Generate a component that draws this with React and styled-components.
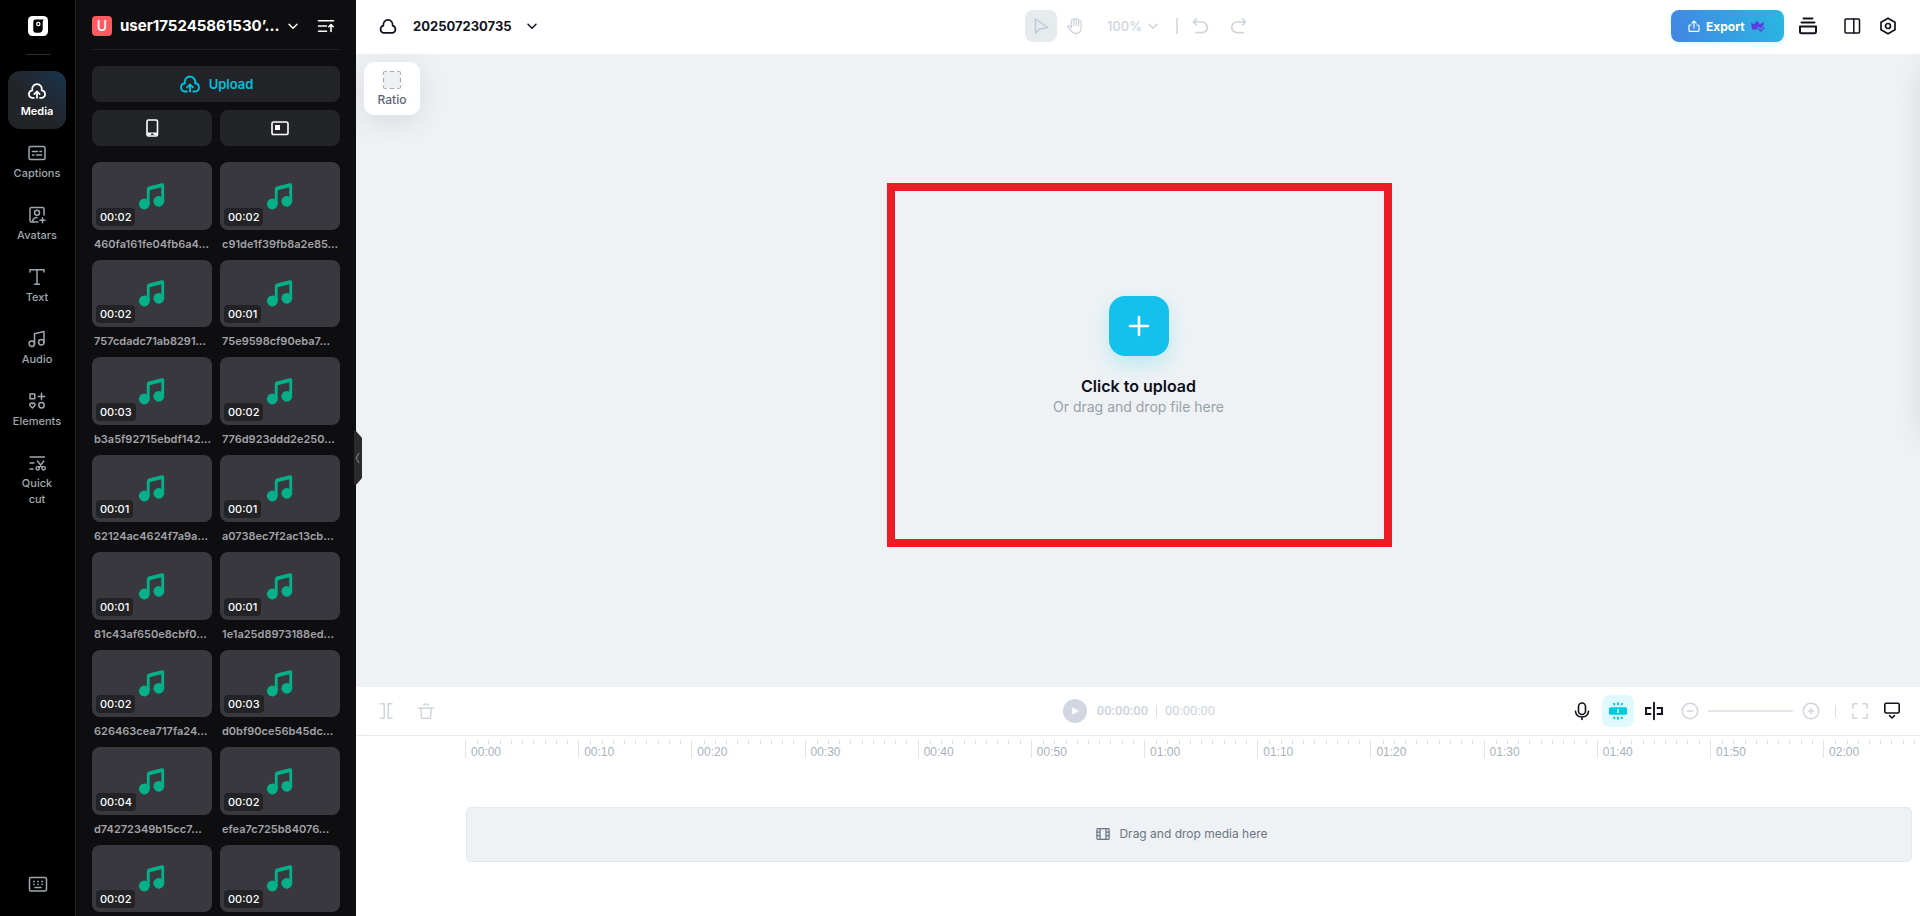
import React from "react";
import styled, { createGlobalStyle, css } from "styled-components";

const GlobalStyle = createGlobalStyle`
  *, *::before, *::after { box-sizing: border-box; }
  body { margin: 0; font-family: Inter, "Liberation Sans", sans-serif; background: #fff; }
  button { font: inherit; color: inherit; border: 0; padding: 0; background: none; cursor: pointer; }
  svg { display: block; flex: none; }
`;

/* ---------- icons ---------- */

function Icon({ size = 20, box = 20, stroke = 1.5, children }) {
  return (
    <svg
      width={size}
      height={size}
      viewBox={`0 0 ${box} ${box}`}
      fill="none"
      stroke="currentColor"
      strokeWidth={stroke}
      strokeLinecap="round"
      strokeLinejoin="round"
      aria-hidden="true"
    >
      {children}
    </svg>
  );
}

const CloudUploadIcon = (props) => (
  <Icon stroke={1.7} {...props}>
    <path d="M7 16.8H4.9a3.8 3.8 0 0 1 .5-7.5A4.8 4.8 0 1 1 14.6 9.3a3.8 3.8 0 0 1 .5 7.5H13" />
    <path d="M10 16.8v-5.7M7.3 13.1 10 10.4l2.7 2.7" />
  </Icon>
);
const CloudIcon = (props) => (
  <Icon stroke={1.7} {...props}>
    <path d="M4.9 16.8a3.8 3.8 0 0 1 .5-7.2A4.7 4.7 0 1 1 14.6 9.6a3.8 3.8 0 0 1 .5 7.2z" />
  </Icon>
);
const CaptionsIcon = () => (
  <Icon>
    <rect x="2" y="3.5" width="16" height="13" rx="1.5" />
    <path d="M5.5 8.5h5M13 8.5h1.5M5.5 12h1.5M9.5 12h5" />
  </Icon>
);
const AvatarsIcon = () => (
  <Icon>
    <path d="M17 10V4a1.5 1.5 0 0 0-1.5-1.5h-11A1.5 1.5 0 0 0 3 4v11.5A1.5 1.5 0 0 0 4.5 17H11M5.5 16.5c.5-2.7 2.2-4 4.5-4" />
    <circle cx="10" cy="7.8" r="2.5" />
    <path d="M15.5 12.7v5M13 15.2h5" />
  </Icon>
);
const TextIcon = () => (
  <Icon>
    <path d="M3 5V2.8h14V5M10 2.8v14.4M7.5 17.2h5" />
  </Icon>
);
const AudioIcon = () => (
  <Icon>
    <circle cx="4.8" cy="14.8" r="2.7" />
    <circle cx="14.3" cy="13.2" r="2.7" />
    <path d="M7.5 14.8V4.8L17 2.5v10.7" />
  </Icon>
);
const ElementsIcon = () => (
  <Icon>
    <rect x="3" y="3" width="4.8" height="4.8" />
    <path d="M14.5 2.2v6.4M11.3 5.4h6.4" />
    <circle cx="14.5" cy="14.3" r="2.7" />
    <path d="M5.4 17 2.8 14.3a1.6 1.6 0 0 1 2.6-1.7 1.6 1.6 0 0 1 2.6 1.7z" />
  </Icon>
);
const QuickCutIcon = () => (
  <Icon stroke={1.4}>
    <path d="M3 4h14.5M3 10h4M3 16h3M10.5 8l5 6.5M16.8 8l-5 6.5" />
    <circle cx="10.8" cy="15.3" r="1.7" />
    <circle cx="16.6" cy="15.3" r="1.7" />
  </Icon>
);
const KeyboardIcon = () => (
  <Icon>
    <rect x="1.5" y="3.5" width="17" height="13.5" rx="1.5" />
    <path d="M7 13.5h6" />
    <path d="M6 7.5h.01M10 7.5h.01M14 7.5h.01M6 10.3h.01M10 10.3h.01M14 10.3h.01" strokeWidth="1.8" />
  </Icon>
);
const LogoIcon = () => (
  <svg width="20" height="20" viewBox="0 0 20 20" role="img" aria-label="Home">
    <rect width="20" height="20" rx="4.5" fill="#fff" />
    <path d="M5.3 5.8Q5.3 3.5 7.6 3.5H15.8L14.7 5.5V12.7Q14.7 16.7 10.7 16.7H8Q5.3 16.7 5.3 14Z" fill="#000" />
    <circle cx="10.3" cy="8" r="1.7" fill="#000" stroke="#fff" strokeWidth="1.2" />
  </svg>
);
const ChevronIcon = ({ size = 12 }) => (
  <Icon size={size} box={12} stroke={1.5}>
    <path d="M2 4.2 6 8.2 10 4.2" />
  </Icon>
);
const SortIcon = () => (
  <Icon size={18} box={18} stroke={1.6}>
    <path d="M1.5 3.8h15M1.5 9h8M1.5 14.2h8M14 14.5V8M11.8 9.7 14 7.5l2.2 2.2" />
  </Icon>
);
const PhoneIcon = () => (
  <Icon stroke={1.6}>
    <rect x="5" y="2" width="10.5" height="16" rx="1.5" />
    <path d="M5.5 14.5h9.5v2.5h-9.5z" fill="currentColor" stroke="none" />
    <path d="M9.7 16.3h1.2" stroke="#232428" />
  </Icon>
);
const ScreenIcon = () => (
  <Icon stroke={1.6}>
    <rect x="2" y="4" width="16" height="12.5" rx="1.8" />
    <rect x="5" y="7" width="5" height="5" fill="currentColor" stroke="none" />
  </Icon>
);
const NoteIcon = () => (
  <svg width="28" height="28" viewBox="0 0 28 28" aria-hidden="true" fill="#06b088">
    <circle cx="6.3" cy="22" r="5.4" />
    <circle cx="20.8" cy="19.3" r="5.4" />
    <path d="M8.8 22V7.3Q8.8 5.2 10.8 4.6L23.7 1.3Q26.2.8 26.2 3.2V19.3H23.3V5.3L11.7 8.3V22Z" />
  </svg>
);
const CursorIcon = () => (
  <Icon>
    <path d="M4.5 3v14.3l4-4.3 8.5-1.5z" />
  </Icon>
);
const HandIcon = () => (
  <Icon stroke={1.3}>
    <path d="M6.5 10.5V4.7a1.2 1.2 0 0 1 2.4 0V9.5 3.5a1.2 1.2 0 0 1 2.4 0V9.5 4.2a1.2 1.2 0 0 1 2.4 0V10 6.2a1.2 1.2 0 0 1 2.5 0v5.3c0 3.7-2 6-5.3 6-2.5 0-4-1-5.2-3L3 10.9c-.5-1 1-1.9 1.9-1l1.6 1.9z" />
  </Icon>
);
const UndoIcon = () => (
  <Icon stroke={1.7}>
    <path d="M6.5 3 3.5 6l3 3M3.5 6h8.5a5.3 5.3 0 0 1 0 10.6H6" />
  </Icon>
);
const RedoIcon = () => (
  <Icon stroke={1.7}>
    <path d="M13.5 3l3 3-3 3M16.5 6H8a5.3 5.3 0 0 0 0 10.6h6" />
  </Icon>
);
const ShareIcon = () => (
  <Icon size={12} box={12} stroke={1.2}>
    <path d="M3.2 5H2a1 1 0 0 0-1 1v4.4a1 1 0 0 0 1 1h8a1 1 0 0 0 1-1V6a1 1 0 0 0-1-1H8.8M6 8V1.2M3.9 3.1 6 1l2.1 2.1" />
  </Icon>
);
const CrownIcon = () => (
  <svg width="14" height="12" viewBox="0 0 14 12" aria-hidden="true">
    <path d="M0 2.8 3.2 4.3 6 .5 8.8 4.3 13 1.8 12.4 6 9.5 8.7 7.5 6.8 6 8.2 7.3 9.5H1.1Z" fill="#5b3fe0" />
    <path d="M7.8 9 10 11l3.5-3.6" fill="none" stroke="#5b3fe0" strokeWidth="1.3" />
  </svg>
);
const StackIcon = () => (
  <Icon stroke={2}>
    <path d="M5.5 2.5h9M3.5 6.4h13" />
    <path d="M2 10.5h16v5.3a1.5 1.5 0 0 1-1.5 1.5h-13A1.5 1.5 0 0 1 2 15.8z" />
  </Icon>
);
const PanelIcon = () => (
  <Icon>
    <rect x="3" y="3" width="14.5" height="14" rx="1" />
    <path d="M11.8 3v14" />
  </Icon>
);
const SettingsIcon = () => (
  <Icon stroke={1.7}>
    <path d="M10 2.2 17 6.2v7.6l-7 4-7-4V6.2z" />
    <circle cx="10" cy="10" r="2.5" />
  </Icon>
);
const RatioIcon = () => (
  <Icon>
    <rect x="2" y="2" width="16" height="16" rx="2" fill="#eef1f3" stroke="none" />
    <path d="M1.5 4.5V3A1.5 1.5 0 0 1 3 1.5h1.5M15.5 1.5H17A1.5 1.5 0 0 1 18.5 3v1.5M18.5 15.5V17a1.5 1.5 0 0 1-1.5 1.5h-1.5M4.5 18.5H3A1.5 1.5 0 0 1 1.5 17v-1.5M8 1.5h4M8 18.5h4M1.5 8v4M18.5 8v4" stroke="#a9b2bb" strokeWidth="1.2" />
  </Icon>
);
const PlusIcon = () => (
  <Icon size={22} box={22} stroke={2.6}>
    <path d="M11 2v18M2 11h18" />
  </Icon>
);
const BracketsIcon = () => (
  <Icon>
    <path d="M4 2.8h4.2v14.4H4M16 2.8h-3.8v14.4H16" />
  </Icon>
);
const TrashIcon = () => (
  <Icon>
    <path d="M2.5 7.2h15M7.3 3.9q2.7-1.6 5.4 0M4.8 7.5l.8 9.7h8.8l.8-9.7" />
  </Icon>
);
const PlayIcon = () => (
  <svg width="24" height="24" viewBox="0 0 24 24" aria-hidden="true">
    <path d="M9.5 8.7v6.6L15.5 12z" fill="#fff" stroke="#fff" strokeWidth=".6" strokeLinejoin="round" />
  </svg>
);
const MicIcon = () => (
  <Icon stroke={1.6}>
    <rect x="6.5" y="2" width="7" height="11.5" rx="3.5" />
    <path d="M3.5 10.3c.3 3.6 2.8 5.7 6.5 5.7s6.2-2.1 6.5-5.7M10 16v2.5" />
  </Icon>
);
const SnapIcon = () => (
  <Icon>
    <rect x="1" y="6.3" width="18" height="7.4" rx="1.5" fill="currentColor" stroke="none" />
    <path d="M10 8v4" stroke="#fff" strokeLinecap="butt" />
    <path d="M10 2v1.5M6 2.7l.4.9M14 2.7l-.4.9M10 16.5V18M6 17.3l.4-.9M14 17.3l-.4-.9" strokeWidth="1.8" />
  </Icon>
);
const SplitIcon = () => (
  <Icon stroke={1.9}>
    <path d="M10 1.8v16.4M6.5 7H2v6h4.5M13.5 7H18v6h-4.5" strokeLinejoin="miter" />
  </Icon>
);
const ZoomOutIcon = () => (
  <Icon>
    <circle cx="10" cy="10" r="7.7" />
    <path d="M7.2 10h5.6" />
  </Icon>
);
const ZoomInIcon = () => (
  <Icon>
    <circle cx="10" cy="10" r="7.7" />
    <path d="M7.2 10h5.6M10 7.2v5.6" />
  </Icon>
);
const FitIcon = () => (
  <Icon stroke={1.6}>
    <path d="M2.8 7V4.3a1.5 1.5 0 0 1 1.5-1.5H7M13 2.8h2.7a1.5 1.5 0 0 1 1.5 1.5V7M17.2 13v2.7a1.5 1.5 0 0 1-1.5 1.5H13M7 17.2H4.3a1.5 1.5 0 0 1-1.5-1.5V13" />
  </Icon>
);
const PreviewIcon = () => (
  <Icon stroke={1.6}>
    <rect x="2.8" y="2.3" width="14.4" height="9.7" rx="1.5" />
    <path d="M7.5 14.7 10 17l2.5-2.3" />
  </Icon>
);
const FilmIcon = () => (
  <Icon size={14} box={14} stroke={1.3}>
    <rect x="1" y="1.7" width="12" height="10.6" rx=".8" />
    <path d="M4 1.7v10.6M10 1.7v10.6M1 5.2h3M1 8.7h3M10 5.2h3M10 8.7h3" />
  </Icon>
);

/* ---------- shell ---------- */

const Shell = styled.div`
  display: flex;
  height: 100vh;
  overflow: hidden;
`;

const Rail = styled.nav`
  flex: none;
  width: 76px;
  padding: 16px 0 22px;
  display: flex;
  flex-direction: column;
  align-items: center;
  background: #000;
  border-right: 1px solid #212226;
`;

const RailDivider = styled.hr`
  width: 24px;
  height: 1px;
  margin: 18px 0 16px;
  border: 0;
  background: #2d2e33;
`;

const RailList = styled.div`
  flex: 1;
  margin-right: 1px;
  display: flex;
  flex-direction: column;
  gap: 4px;
`;

const RailItem = styled.button`
  width: 58px;
  min-height: 58px;
  padding: 10px ${(p) => (p.$wrap ? 8 : 4)}px;
  display: flex;
  flex-direction: column;
  align-items: center;
  gap: 2px;
  border-radius: 12px;
  font-size: 11px;
  line-height: 16px;
  font-weight: 500;
  color: #9fa8ad;
  white-space: ${(p) => (p.$wrap ? "normal" : "nowrap")};
  ${(p) =>
    p.$active &&
    css`
      color: #fff;
      font-weight: 600;
      background: linear-gradient(45deg, #232428 45%, #17354f 100%);
    `}
`;

const RailFoot = styled.button`
  color: #9fa8ad;
`;

/* ---------- media panel ---------- */

const Panel = styled.aside`
  position: relative;
  flex: none;
  width: 280px;
  padding: 0 16px;
  background: #0e0e10;
  color: #fff;
`;

const PanelHead = styled.header`
  height: 50px;
  padding: 8px 5px 5px 0;
  display: flex;
  align-items: center;
  gap: 8px;
  border-bottom: 1px solid #212226;
`;

const Initial = styled.span`
  flex: none;
  width: 20px;
  height: 20px;
  border-radius: 4px;
  background: #ff5a5f;
  font-size: 14px;
  line-height: 20px;
  font-weight: 500;
  text-align: center;
`;

const Workspace = styled.button`
  flex: 1;
  min-width: 0;
  display: flex;
  align-items: center;
  justify-content: space-between;
  font-size: 15px;
  line-height: 20px;
  font-weight: 700;
  white-space: nowrap;
`;

const SortButton = styled.button`
  margin-left: 10px;
`;

const Sources = styled.div`
  margin: 16px 0;
  display: grid;
  grid-template-columns: 1fr 1fr;
  gap: 8px;
`;

const SourceButton = styled.button`
  grid-column: ${(p) => (p.$wide ? "1 / -1" : "auto")};
  height: 36px;
  display: flex;
  align-items: center;
  justify-content: center;
  gap: 8px;
  border-radius: 8px;
  background: #232428;
  color: ${(p) => (p.$wide ? "#00c1df" : "#fff")};
  font-size: 13px;
  font-weight: 600;
`;

const MediaGrid = styled.ul`
  margin: 0;
  padding: 0;
  list-style: none;
  display: grid;
  grid-template-columns: 1fr 1fr;
  gap: 8px;
`;

const MediaItem = styled.li`
  min-width: 0;
`;

const Thumb = styled.div`
  position: relative;
  aspect-ratio: 16 / 9;
  display: flex;
  align-items: center;
  justify-content: center;
  border-radius: 8px;
  background: #38383e;
`;

const Duration = styled.span`
  position: absolute;
  left: 4px;
  bottom: 4px;
  padding: 0 4px;
  border-radius: 4px;
  background: #222326;
  font-size: 11px;
  line-height: 18px;
  font-weight: 500;
`;

const FileName = styled.div`
  margin-top: 6px;
  padding-left: 2px;
  overflow: hidden;
  white-space: nowrap;
  font-size: 11px;
  line-height: 16px;
  font-weight: 600;
  color: #a2a2a8;
`;

const Collapse = styled.button`
  position: absolute;
  z-index: 2;
  left: 278px;
  top: 431px;
  width: 8px;
  height: 54px;
  padding-left: 1px;
  display: flex;
  align-items: center;
  border-radius: 0 4px 4px 0;
  clip-path: polygon(0 0, 2px 0, 8px 7px, 8px 47px, 2px 54px, 0 54px);
  background: #2b2b2c;
  color: #77787c;
`;

/* ---------- main ---------- */

const Main = styled.main`
  flex: 1;
  min-width: 0;
  display: flex;
  flex-direction: column;
`;

const TopBar = styled.header`
  flex: none;
  height: 54px;
  padding: 0 18px 2px 22px;
  display: grid;
  grid-template-columns: 1fr auto 1fr;
  align-items: center;
  color: #12121c;
`;

const Group = styled.div`
  display: flex;
  align-items: center;
  justify-content: ${(p) => p.$align || "flex-start"};
  gap: ${(p) => p.$gap || 0}px;
`;

const ProjectName = styled.button`
  display: flex;
  align-items: center;
  gap: 14px;
  font-size: 13px;
  line-height: 20px;
  font-weight: 700;
`;

const IconButton = styled.button`
  width: ${(p) => p.$width || 32}px;
  height: 32px;
  display: flex;
  align-items: center;
  justify-content: center;
  border-radius: 8px;
  color: ${(p) => (p.$muted ? "#d0d5dd" : "#12121c")};
  ${(p) => p.$selected && css`background: #e6ebee; color: #c3c9d3;`}
  ${(p) => p.$on && css`background: #dff9fc; color: #00cae0;`}
`;

const ZoomLevel = styled.button`
  margin: 0 11px 0 16px;
  display: flex;
  align-items: center;
  gap: 5px;
  font-size: 13px;
  line-height: 20px;
  font-weight: 500;
  color: #d0d5dd;
`;

const Separator = styled.span`
  width: ${(p) => p.$width || 1}px;
  height: ${(p) => p.$height || 12}px;
  margin: 0 ${(p) => p.$space}px;
  background: #dbe0e6;
`;

const ExportButton = styled.button`
  width: 113px;
  height: 32px;
  padding-left: 17px;
  margin-right: 10px;
  display: flex;
  align-items: center;
  gap: 6px;
  border-radius: 8px;
  background: linear-gradient(75deg, #4485e3, #28b8e1);
  box-shadow: 0 2px 6px rgba(40, 180, 225, 0.15);
  color: #fff;
  font-size: 12px;
  font-weight: 700;
`;

const Stage = styled.section`
  position: relative;
  flex: 1;
  min-height: 0;
  overflow: hidden;
  display: flex;
  flex-direction: column;
  align-items: center;
  background: #eef2f5;
`;

const RatioCard = styled.button`
  position: absolute;
  left: 8px;
  top: 8px;
  width: 56px;
  height: 53px;
  padding-top: 8px;
  display: flex;
  flex-direction: column;
  align-items: center;
  gap: 2px;
  border-radius: 10px;
  background: #fff;
  box-shadow: 0 6px 30px rgba(0, 0, 0, 0.1);
  font-size: 12px;
  line-height: 16px;
  font-weight: 500;
  color: #5d6475;
`;

const SideDrawer = styled.div`
  position: absolute;
  left: 100%;
  top: 8px;
  width: 56px;
  height: 370px;
  border-radius: 10px;
  box-shadow: 0 6px 30px rgba(0, 0, 0, 0.1);
`;

const UploadFrame = styled.div`
  width: 505px;
  height: 364px;
  margin: 129px 0 0 3px;
  padding: 105px 2px 0 0;
  display: flex;
  flex-direction: column;
  align-items: center;
  border: 8px solid #ed1c24;
`;

const AddButton = styled.button`
  width: 60px;
  height: 60px;
  margin-bottom: 19px;
  display: flex;
  align-items: center;
  justify-content: center;
  border-radius: 16px;
  background: #13c1ec;
  box-shadow: 0 8px 20px rgba(20, 205, 225, 0.24);
  color: #fff;
`;

const UploadTitle = styled.strong`
  font-size: 16px;
  line-height: 22px;
  font-weight: 600;
  color: #0f0f1a;
`;

const UploadHint = styled.span`
  font-size: 14px;
  line-height: 20px;
  color: #98a1a8;
`;

/* ---------- timeline ---------- */

const Timeline = styled.section`
  flex: none;
  overflow: hidden;
  background: #fff;
`;

const TimelineBar = styled.div`
  height: 49px;
  padding: 0 12px 0 14px;
  display: grid;
  grid-template-columns: 1fr auto 1fr;
  align-items: center;
  border-bottom: 1px solid #e6e9ec;
`;

const PlayButton = styled.button`
  width: 24px;
  height: 24px;
  margin-right: 10px;
  border-radius: 50%;
  background: #d1d6e0;
`;

const Timecode = styled.span`
  font-family: Roboto, sans-serif;
  font-size: 13px;
  line-height: 16px;
  color: #ccd3dc;
  font-weight: ${(p) => (p.$total ? 400 : 500)};
`;

const ZoomSlider = styled.input`
  appearance: none;
  width: 85px;
  height: 2px;
  margin: 0 2px;
  border-radius: 1px;
  background: #e4e8ec;
  &::-webkit-slider-thumb {
    appearance: none;
    width: 2px;
    height: 2px;
    background: #e4e8ec;
  }
`;

const Ruler = styled.div`
  margin: 4px -5px 49px 109px;
  display: flex;
`;

const RulerBlock = styled.div`
  flex: ${(p) => p.$ticks} 0 0;
  min-width: 0;
  height: 18px;
  border-left: 1px solid #e1e5e9;
`;

const Ticks = styled.div`
  display: flex;
  height: 4px;
`;

const Tick = styled.i`
  flex: 1;
  border-left: 1px solid #dde2e6;
  &:first-child { border-color: transparent; }
`;

const RulerLabel = styled.div`
  padding-left: 5px;
  font-family: "Liberation Sans", Arial, sans-serif;
  font-size: 12px;
  line-height: 16px;
  color: #a9b1bd;
`;

const DropTrack = styled.div`
  height: 55px;
  margin: 0 8px 54px 110px;
  padding: 0 14px 2px 0;
  display: flex;
  align-items: center;
  justify-content: center;
  gap: 9px;
  border: 1px solid #e4e9ec;
  border-radius: 5px;
  background: #eef2f5;
  font-size: 12px;
  color: #6d7482;
`;

/* ---------- data ---------- */

const railItems = [
  { label: "Media", icon: <CloudUploadIcon />, active: true },
  { label: "Captions", icon: <CaptionsIcon /> },
  { label: "Avatars", icon: <AvatarsIcon /> },
  { label: "Text", icon: <TextIcon /> },
  { label: "Audio", icon: <AudioIcon /> },
  { label: "Elements", icon: <ElementsIcon /> },
  { label: "Quick cut", icon: <QuickCutIcon />, wrap: true },
];

const media = [
  ["460fa161fe04fb6a4…", "00:02"],
  ["c91de1f39fb8a2e85…", "00:02"],
  ["757cdadc71ab8291…", "00:02"],
  ["75e9598cf90eba7…", "00:01"],
  ["b3a5f92715ebdf142…", "00:03"],
  ["776d923ddd2e250…", "00:02"],
  ["62124ac4624f7a9a…", "00:01"],
  ["a0738ec7f2ac13cb…", "00:01"],
  ["81c43af650e8cbf0…", "00:01"],
  ["1e1a25d8973188ed…", "00:01"],
  ["626463cea717fa24…", "00:02"],
  ["d0bf90ce56b45dc…", "00:03"],
  ["d74272349b15cc7…", "00:04"],
  ["efea7c725b84076…", "00:02"],
  ["", "00:02"],
  ["", "00:02"],
];

const marks = [
  "00:00", "00:10", "00:20", "00:30", "00:40", "00:50", "01:00",
  "01:10", "01:20", "01:30", "01:40", "01:50", "02:00",
];

export default function App() {
  return (
    <>
      <GlobalStyle />
      <Shell>
        <Rail>
          <LogoIcon />
          <RailDivider />
          <RailList>
            {railItems.map((item) => (
              <RailItem key={item.label} $active={item.active} $wrap={item.wrap}>
                {item.icon}
                <span>{item.label}</span>
              </RailItem>
            ))}
          </RailList>
          <RailFoot aria-label="Keyboard shortcuts">
            <KeyboardIcon />
          </RailFoot>
        </Rail>

        <Panel>
          <PanelHead>
            <Initial>U</Initial>
            <Workspace>
              user175245861530’…
              <ChevronIcon />
            </Workspace>
            <SortButton aria-label="Sort">
              <SortIcon />
            </SortButton>
          </PanelHead>
          <Sources>
            <SourceButton $wide>
              <CloudUploadIcon size={22} />
              Upload
            </SourceButton>
            <SourceButton aria-label="From phone">
              <PhoneIcon />
            </SourceButton>
            <SourceButton aria-label="Record screen">
              <ScreenIcon />
            </SourceButton>
          </Sources>
          <MediaGrid>
            {media.map(([name, time], i) => (
              <MediaItem key={i}>
                <Thumb>
                  <NoteIcon />
                  <Duration>{time}</Duration>
                </Thumb>
                <FileName>{name}</FileName>
              </MediaItem>
            ))}
          </MediaGrid>
          <Collapse aria-label="Collapse panel">
            <svg width="5" height="12" viewBox="0 0 5 12" fill="none" stroke="currentColor" strokeWidth="1.2" aria-hidden="true">
              <path d="M4 1 1.2 6 4 11" />
            </svg>
          </Collapse>
        </Panel>

        <Main>
          <TopBar>
            <Group $gap={15}>
              <CloudIcon />
              <ProjectName>
                202507230735
                <ChevronIcon />
              </ProjectName>
            </Group>
            <Group>
              <Group $gap={2}>
                <IconButton $muted $selected aria-label="Select">
                  <CursorIcon />
                </IconButton>
                <IconButton $muted aria-label="Hand">
                  <HandIcon />
                </IconButton>
              </Group>
              <ZoomLevel>
                100%
                <ChevronIcon />
              </ZoomLevel>
              <Separator $width={2} $height={16} $space={6} />
              <Group $gap={7}>
                <IconButton $muted aria-label="Undo">
                  <UndoIcon />
                </IconButton>
                <IconButton $muted aria-label="Redo">
                  <RedoIcon />
                </IconButton>
              </Group>
            </Group>
            <Group $align="flex-end">
              <ExportButton>
                <ShareIcon />
                Export
                <CrownIcon />
              </ExportButton>
              <Group $gap={16}>
                <IconButton $width={28} aria-label="Tasks">
                  <StackIcon />
                </IconButton>
                <Group $gap={8}>
                  <IconButton $width={28} aria-label="Layout">
                    <PanelIcon />
                  </IconButton>
                  <IconButton $width={28} aria-label="Settings">
                    <SettingsIcon />
                  </IconButton>
                </Group>
              </Group>
            </Group>
          </TopBar>

          <Stage>
            <RatioCard>
              <RatioIcon />
              Ratio
            </RatioCard>
            <UploadFrame>
              <AddButton aria-label="Add media">
                <PlusIcon />
              </AddButton>
              <UploadTitle>Click to upload</UploadTitle>
              <UploadHint>Or drag and drop file here</UploadHint>
            </UploadFrame>
            <SideDrawer />
          </Stage>

          <Timeline>
            <TimelineBar>
              <Group $gap={8}>
                <IconButton $muted aria-label="Split">
                  <BracketsIcon />
                </IconButton>
                <IconButton $muted aria-label="Delete">
                  <TrashIcon />
                </IconButton>
              </Group>
              <Group>
                <PlayButton aria-label="Play">
                  <PlayIcon />
                </PlayButton>
                <Timecode>00:00:00</Timecode>
                <Separator $space={8} />
                <Timecode $total>00:00:00</Timecode>
              </Group>
              <Group $align="flex-end">
                <Group $gap={4}>
                  <IconButton aria-label="Record voice">
                    <MicIcon />
                  </IconButton>
                  <IconButton $on aria-label="Snapping">
                    <SnapIcon />
                  </IconButton>
                  <IconButton aria-label="Preview axis">
                    <SplitIcon />
                  </IconButton>
                  <IconButton $muted aria-label="Zoom out">
                    <ZoomOutIcon />
                  </IconButton>
                </Group>
                <ZoomSlider type="range" aria-label="Timeline zoom" defaultValue={0} />
                <IconButton $muted aria-label="Zoom in">
                  <ZoomInIcon />
                </IconButton>
                <Separator $space={8} />
                <IconButton $muted aria-label="Fit timeline">
                  <FitIcon />
                </IconButton>
                <IconButton aria-label="Preview">
                  <PreviewIcon />
                </IconButton>
              </Group>
            </TimelineBar>
            <Ruler>
              {marks.map((mark, i) => {
                const ticks = i === marks.length - 1 ? 9 : 10;
                return (
                  <RulerBlock key={mark} $ticks={ticks}>
                    <Ticks>
                      {Array.from({ length: ticks }, (_, t) => (
                        <Tick key={t} />
                      ))}
                    </Ticks>
                    <RulerLabel>{mark}</RulerLabel>
                  </RulerBlock>
                );
              })}
            </Ruler>
            <DropTrack>
              <FilmIcon />
              Drag and drop media here
            </DropTrack>
          </Timeline>
        </Main>
      </Shell>
    </>
  );
}
